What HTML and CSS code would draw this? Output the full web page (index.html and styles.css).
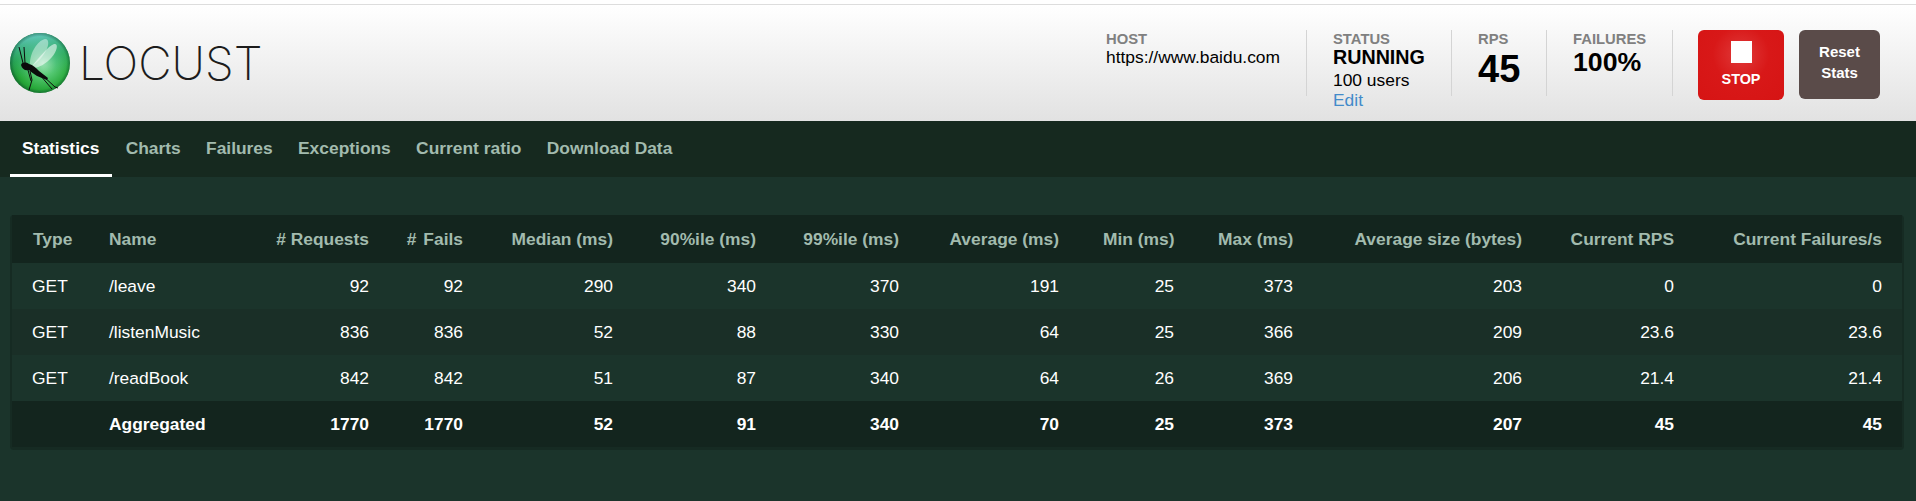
FILE: index.html
```html
<!DOCTYPE html>
<html lang="en">
<head>
<meta charset="utf-8">
<title>Locust</title>
<link rel="stylesheet" href="styles.css">
</head>
<body>
<header class="header">
  <div class="brand">
    <svg class="logo" viewBox="0 0 60 60" width="60" height="60" aria-hidden="true">
      <defs>
        <radialGradient id="orb" cx="0.55" cy="0.5" r="0.55">
          <stop offset="0" stop-color="#b4f0bc"/>
          <stop offset="0.4" stop-color="#54c872"/>
          <stop offset="0.8" stop-color="#28a83a"/>
          <stop offset="1" stop-color="#18882a"/>
        </radialGradient>
        <linearGradient id="sheen" x1="0.4" y1="0" x2="0.5" y2="0.7">
          <stop offset="0" stop-color="#70d0d0" stop-opacity="0.95"/>
          <stop offset="0.6" stop-color="#30a890" stop-opacity="0.35"/>
          <stop offset="1" stop-color="#30a890" stop-opacity="0"/>
        </linearGradient>
        <radialGradient id="rim" cx="0.5" cy="0.5" r="0.5">
          <stop offset="0.88" stop-color="#0a4a30" stop-opacity="0"/>
          <stop offset="1" stop-color="#0a4a30" stop-opacity="0.45"/>
        </radialGradient>
      </defs>
      <circle cx="30" cy="30" r="30" fill="url(#orb)"/>
      <circle cx="30" cy="30" r="30" fill="url(#sheen)"/>
      <path d="M20 31 C20 20 27 8 35 6 C40 6 39 14 34 21 C30 27 25 31 22 33Z" fill="#fff" fill-opacity="0.42"/>
      <path d="M22 33 C30 24 38 13 44 11 C49 10 47 18 42 24 C36 31 28 35 24 35Z" fill="#fff" fill-opacity="0.55"/>
      <circle cx="30" cy="30" r="30" fill="url(#rim)"/>
      <path d="M11 32 C12 29 16 29 19 31 C23 32 26 35 29 38 L38 45 L37 47 L27 43 C24 41 21 39 19 37 C15 38 12 36 11 32Z" fill="#0b0b0b"/>
      <path d="M13 30 L9 14 M15 30 L14 14 M20 38 L22 47 L19 57 M18 37 L21 48 M32 42 L45 54 L48 55 M30 42 L42 56" stroke="#0b0b0b" stroke-width="1" fill="none"/>
    </svg>
    <span class="wordmark">LOCUST</span>
  </div>
  <div class="info">
    <div class="stat stat-host">
      <div class="label">HOST</div>
      <div class="host">https://www.baidu.com</div>
    </div>
    <div class="stat stat-status">
      <div class="label">STATUS</div>
      <div class="running">RUNNING</div>
      <div class="users">100 users</div>
      <a class="edit" href="#">Edit</a>
    </div>
    <div class="stat stat-rps">
      <div class="label">RPS</div>
      <div class="rps">45</div>
    </div>
    <div class="stat stat-fail">
      <div class="label">FAILURES</div>
      <div class="fail">100%</div>
    </div>
    <button class="btn stop"><span class="square"></span><span>STOP</span></button>
    <button class="btn reset">Reset<br>Stats</button>
  </div>
</header>
<nav class="tabs">
  <a class="tab active" href="#">Statistics</a>
  <a class="tab" href="#">Charts</a>
  <a class="tab" href="#">Failures</a>
  <a class="tab" href="#">Exceptions</a>
  <a class="tab" href="#">Current ratio</a>
  <a class="tab" href="#">Download Data</a>
</nav>
<main class="main">
  <div class="panel">
    <table class="stats">
      <colgroup>
        <col class="c-type"><col class="c-name"><col class="c-req"><col class="c-fail"><col class="c-med"><col class="c-p90"><col class="c-p99"><col class="c-avg"><col class="c-min"><col class="c-max"><col class="c-size"><col class="c-rps"><col class="c-frate">
      </colgroup>
      <thead>
        <tr><th class="l">Type</th><th class="l">Name</th><th># Requests</th><th class="spaced"># Fails</th><th>Median (ms)</th><th>90%ile (ms)</th><th>99%ile (ms)</th><th>Average (ms)</th><th>Min (ms)</th><th>Max (ms)</th><th>Average size (bytes)</th><th>Current RPS</th><th>Current Failures/s</th></tr>
      </thead>
      <tbody>
        <tr class="odd"><td class="l">GET</td><td class="l">/leave</td><td>92</td><td>92</td><td>290</td><td>340</td><td>370</td><td>191</td><td>25</td><td>373</td><td>203</td><td>0</td><td>0</td></tr>
        <tr class="even"><td class="l">GET</td><td class="l">/listenMusic</td><td>836</td><td>836</td><td>52</td><td>88</td><td>330</td><td>64</td><td>25</td><td>366</td><td>209</td><td>23.6</td><td>23.6</td></tr>
        <tr class="odd"><td class="l">GET</td><td class="l">/readBook</td><td>842</td><td>842</td><td>51</td><td>87</td><td>340</td><td>64</td><td>26</td><td>369</td><td>206</td><td>21.4</td><td>21.4</td></tr>
        <tr class="total"><td class="l"></td><td class="l">Aggregated</td><td>1770</td><td>1770</td><td>52</td><td>91</td><td>340</td><td>70</td><td>25</td><td>373</td><td>207</td><td>45</td><td>45</td></tr>
      </tbody>
    </table>
  </div>
</main>
</body>
</html>
```
FILE: styles.css
```css
* { box-sizing: border-box; }
html, body { margin: 0; height: 100%; }
body {
  background: #1b342b linear-gradient(#fff, #fff) no-repeat 0 0 / 100% 4px;
  font-family: "Liberation Sans", Arial, sans-serif;
  font-size: 17.4px;
  color: #fff;
  overflow: hidden;
  padding-top: 4px;
}
.header {
  height: 117px;
  border-top: 1px solid #ddd;
  background: linear-gradient(#fff 0%, #e2e2e2 100%);
  display: flex;
  justify-content: space-between;
  color: #000;
}
.brand { display: flex; align-items: center; gap: 9px; padding-left: 10px; height: 116px; }
.logo { display: block; }
.wordmark {
  font-family: "Inter", sans-serif;
  font-weight: 200;
  font-size: 46px;
  letter-spacing: 0;
  color: #1c1c1c;
}
.info { display: flex; align-items: flex-start; padding-top: 25px; padding-right: 36px; }
.stat { height: 66px; padding-left: 26px; border-right: 1px solid #d4d4d4; }
.stat-host { width: 227px; }
.stat-status { width: 145px; }
.stat-rps { width: 95px; }
.stat-fail { width: 126px; }
.label { font-size: 14.8px; font-weight: 700; color: #808080; line-height: 17px; margin-top: 1px; }
.host { line-height: 18px; }
.running { font-size: 19.7px; font-weight: 700; line-height: 24px; margin-top: -3px; }
.users { line-height: 21px; margin-top: 1px; }
.edit { display: block; color: #428bca; text-decoration: none; line-height: 20px; margin-top: -1px; }
.rps { font-size: 38px; font-weight: 700; line-height: 42px; }
.fail { font-size: 26.7px; font-weight: 700; line-height: 30px; margin-top: -1px; }
.btn {
  border: 0;
  border-radius: 6px;
  color: #fff;
  font-family: inherit;
  font-weight: 700;
  padding: 0;
  display: flex;
  flex-direction: column;
  align-items: center;
}
.stop {
  width: 86px;
  height: 70px;
  margin-left: 25px;
  padding-top: 11px;
  background: radial-gradient(circle at 50% 35%, #e03a3a 0%, #d81818 45%, #d61414 100%);
  font-size: 14.4px;
  line-height: 16px;
}
.square { width: 21px; height: 22px; background: #fff; margin-bottom: 8px; }
.reset {
  width: 81px;
  height: 69px;
  margin-left: 15px;
  padding-top: 12px;
  background: #5a4b49;
  font-size: 15px;
  line-height: 20.5px;
}
.tabs { height: 56px; background: #16291f; display: flex; padding-left: 10px; gap: 1.3px; }
.tab {
  height: 56px;
  padding: 0 12px;
  line-height: 54px;
  font-weight: 700;
  color: #a2bbae;
  text-decoration: none;
}
.tab.active { color: #fff; border-bottom: 3px solid #fff; padding-right: 13px; }
.main { padding: 38px 12px 0 10px; }
.panel { background: #162b23; border-radius: 4px; padding: 0 2px 3px; }
.stats { width: 1890px; table-layout: fixed; border-collapse: collapse; }
.stats th, .stats td { text-align: right; padding: 0 22px; white-space: nowrap; }
.stats th { height: 48px; font-weight: 700; color: #a2bbae; }
.stats .spaced { word-spacing: 2px; padding-left: 0; }
.stats thead tr { background: #13251e; }
.stats td { height: 46px; }
.stats .l { text-align: left; padding-right: 0; padding-left: 20px; }
.stats th.l { padding-left: 21px; }
.stats .l + .l { padding-left: 22px; }
.stats th:last-child, .stats td:last-child { padding-right: 20px; }
.c-type { width: 75px; }
.c-name { width: 126px; }
.c-req { width: 178px; }
.c-fail { width: 94px; }
.c-med { width: 150px; }
.c-p90 { width: 143px; }
.c-p99 { width: 143px; }
.c-avg { width: 160px; }
.c-min { width: 115px; }
.c-max { width: 119px; }
.c-size { width: 229px; }
.c-rps { width: 152px; }
.c-frate { width: 206px; }
.odd { background: #1b342b; }
.even { background: #1a2f27; }
.total { background: #13251e; font-weight: 700; }
```
